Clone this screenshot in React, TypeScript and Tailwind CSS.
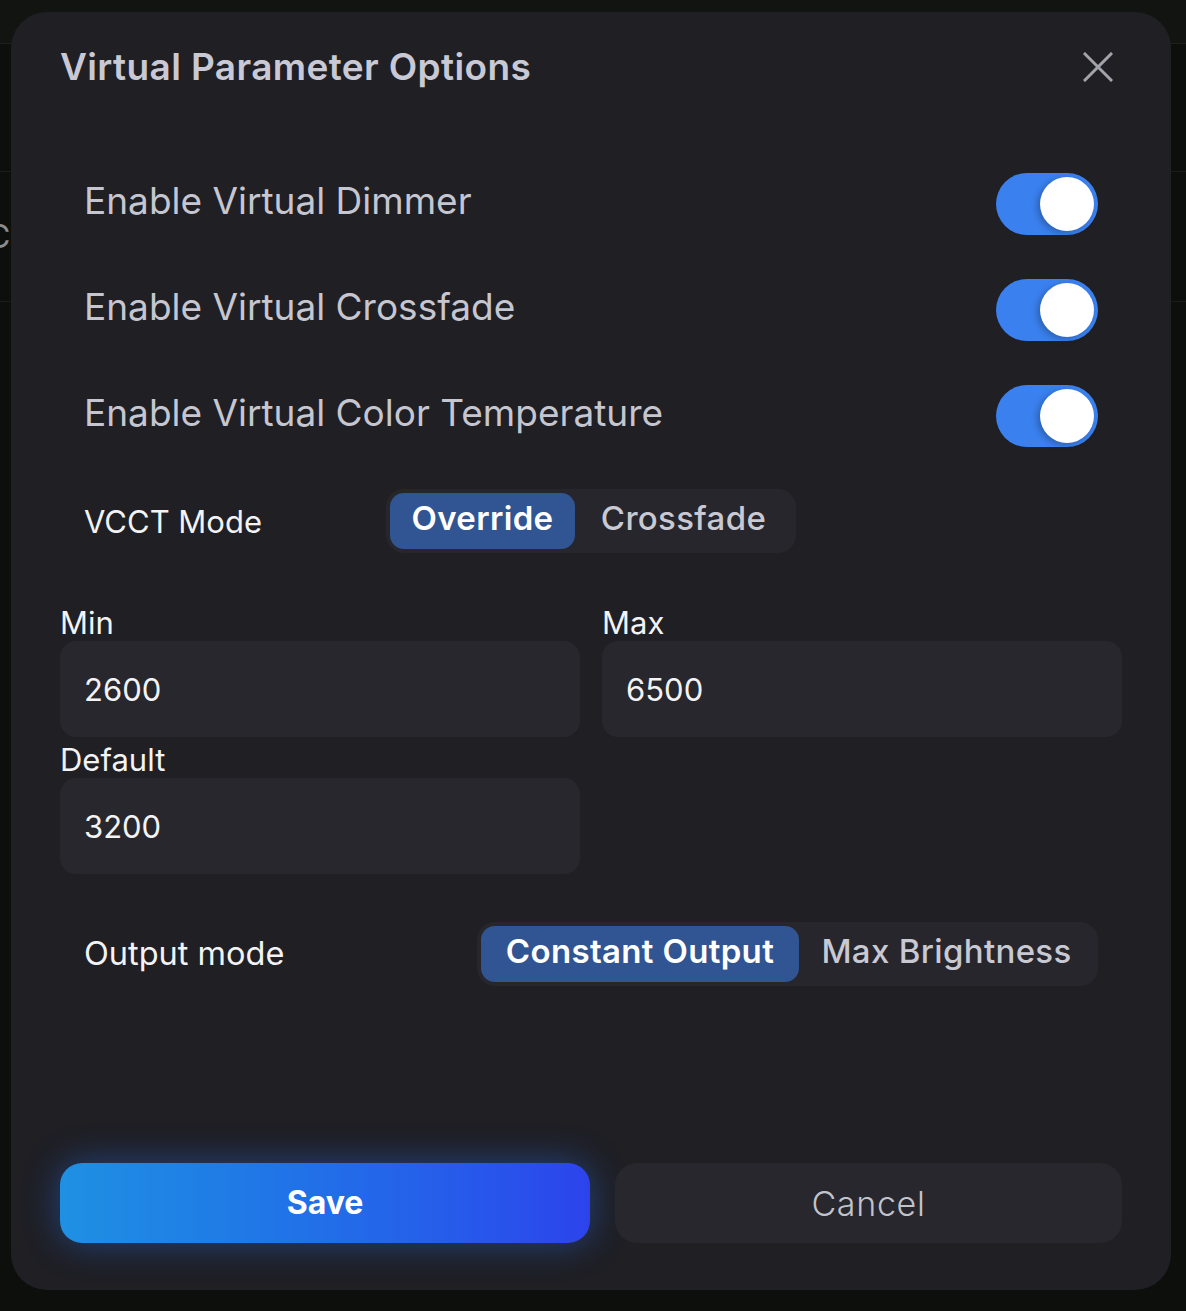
import { useState } from 'react';

const SANS = "font-['Inter','Liberation_Sans',sans-serif]";

function Toggle({ on, onChange }: { on: boolean; onChange: () => void }) {
  return (
    <button
      onClick={onChange}
      className={`relative h-[62px] w-[102px] rounded-full transition-colors ${on ? 'bg-[#3a81ef]' : 'bg-[#3a3a42]'}`}
    >
      <span
        className={`absolute top-[4px] h-[54px] w-[54px] rounded-full bg-white shadow-[-3px_2px_6px_rgba(0,0,0,0.25)] transition-all ${on ? 'left-[44px]' : 'left-[4px]'}`}
      />
    </button>
  );
}

function Segmented({
  options,
  value,
  onChange,
  widths,
}: {
  options: string[];
  value: string;
  onChange: (v: string) => void;
  widths: string[];
}) {
  return (
    <div className="flex h-[64px] items-center rounded-[18px] bg-[#26262c] p-[4px]">
      {options.map((o, i) => (
        <button
          key={o}
          onClick={() => onChange(o)}
          className={`h-[56px] rounded-[14px] pb-[5px] text-[33px] tracking-[0.01em] ${SANS} ${widths[i]} ${
            value === o ? 'bg-[#315592] font-semibold text-white' : 'font-medium text-[#c9c9d3]'
          }`}
        >
          {o}
        </button>
      ))}
    </div>
  );
}

function Field({ label, value }: { label: string; value: string }) {
  return (
    <div className="flex flex-col">
      <label className={`h-[41px] pt-[2px] text-[31px] leading-[41px] text-[#f3f3f5] ${SANS}`}>{label}</label>
      <input
        defaultValue={value}
        className={`h-[96px] w-full rounded-[16px] bg-[#27272d] px-6 text-[31px] text-[#f3f3f5] outline-none ${SANS}`}
      />
    </div>
  );
}

export default function App() {
  const [dimmer, setDimmer] = useState(true);
  const [crossfade, setCrossfade] = useState(true);
  const [colorTemp, setColorTemp] = useState(true);
  const [vcct, setVcct] = useState('Override');
  const [output, setOutput] = useState('Constant Output');

  const toggles = [
    { label: 'Enable Virtual Dimmer', on: dimmer, set: () => setDimmer(v => !v) },
    { label: 'Enable Virtual Crossfade', on: crossfade, set: () => setCrossfade(v => !v) },
    { label: 'Enable Virtual Color Temperature', on: colorTemp, set: () => setColorTemp(v => !v) },
  ];

  return (
    <div className="relative h-[1311px] w-[1186px] overflow-hidden bg-[#0c0f0b]">
      {/* page behind the dialog */}
      <div className="h-[44px] border-b border-[#1d201c] bg-[#121411]" />
      <div className="h-[128px] border-b border-[#1a1d19]" />
      <div className="flex h-[130px] items-center border-b border-[#1a1d19]">
        <span className={`-ml-[13px] text-[32px] text-[#8a8c90] ${SANS}`}>C</span>
      </div>

      {/* dialog */}
      <div className="absolute left-[11px] top-[12px] flex h-[1278px] w-[1160px] flex-col rounded-[36px] bg-[#1f1f24] px-[49px] pb-[47px]">
        <div className="flex h-[110px] items-center justify-between pr-[9px]">
          <h2 className={`text-[37px] font-semibold tracking-[0.01em] text-[#c9c9d6] ${SANS}`}>
            Virtual Parameter Options
          </h2>
          <button className="p-0">
            <svg width="30" height="30" viewBox="0 0 30 30" fill="none" stroke="#a3a3ab" strokeWidth="3" strokeLinecap="square">
              <path d="M2 2L28 28M28 2L2 28" />
            </svg>
          </button>
        </div>

        <div className="mt-[29px] flex flex-col px-6">
          {toggles.map(t => (
            <div key={t.label} className="flex h-[106px] items-center justify-between">
              <span className={`pb-[7px] text-[37px] text-[#c6c6d0] ${SANS}`}>{t.label}</span>
              <Toggle on={t.on} onChange={t.set} />
            </div>
          ))}

          <div className="flex h-[104px] items-center">
            <span className={`w-[302px] pt-[2px] text-[31px] text-[#f3f3f5] ${SANS}`}>VCCT Mode</span>
            <Segmented
              options={['Override', 'Crossfade']}
              value={vcct}
              onChange={setVcct}
              widths={['w-[185px]', 'w-[217px]']}
            />
          </div>
        </div>

        <div className="mt-[27px] grid grid-cols-2 gap-x-[22px]">
          <Field label="Min" value="2600" />
          <Field label="Max" value="6500" />
          <Field label="Default" value="3200" />
        </div>

        <div className="mt-[48px] flex h-[64px] items-center justify-between px-6">
          <span className={`text-[32.5px] text-[#f3f3f5] ${SANS}`}>Output mode</span>
          <Segmented
            options={['Constant Output', 'Max Brightness']}
            value={output}
            onChange={setOutput}
            widths={['w-[318px]', 'w-[295px]']}
          />
        </div>

        <div className="mt-auto flex justify-between">
          <button
            className={`h-[80px] w-[530px] rounded-[22px] bg-linear-to-r from-[#1f90e2] to-[#2c43ec] text-[32px] font-bold text-white shadow-[0_0_36px_rgba(40,110,240,0.45)] ${SANS}`}
          >
            Save
          </button>
          <button
            className={`h-[80px] w-[507px] rounded-[22px] bg-[#27272d] text-[34px] font-light tracking-[0.02em] text-[#c3c3cb] ${SANS}`}
          >
            Cancel
          </button>
        </div>
      </div>
    </div>
  );
}
